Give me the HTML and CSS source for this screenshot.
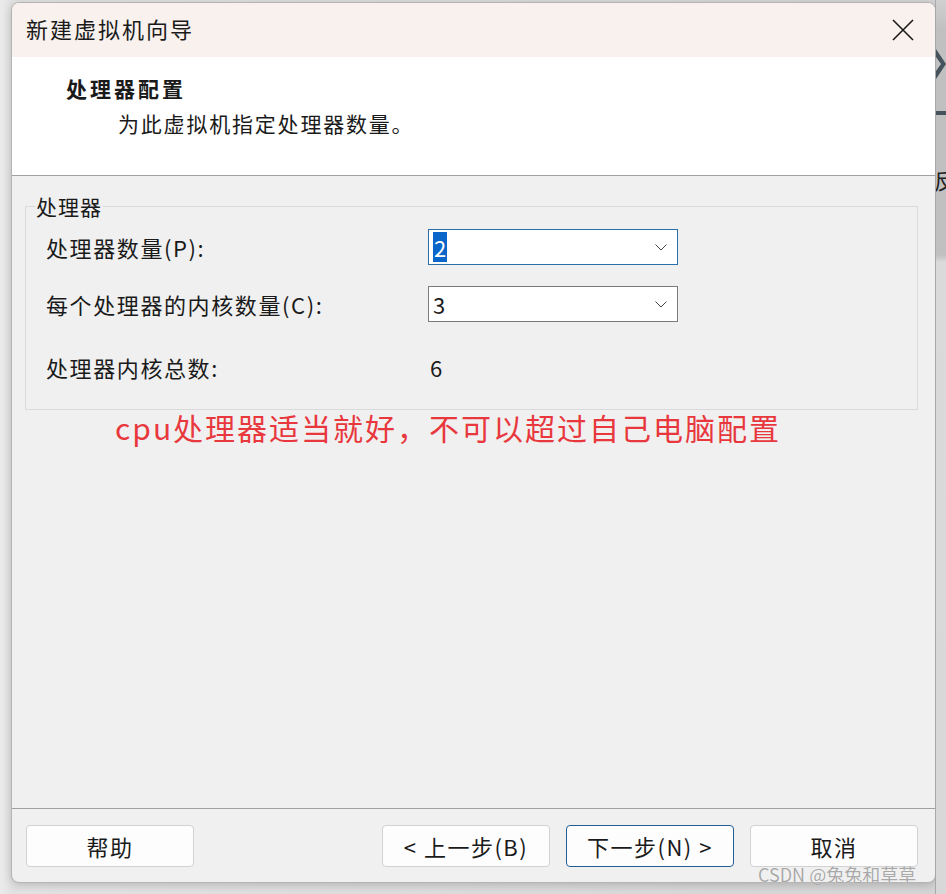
FILE: index.html
```html
<!DOCTYPE html>
<html lang="zh-CN">
<head>
    <meta charset="UTF-8">
    <title>新建虚拟机向导</title>
    <link rel="stylesheet" href="styles.css">
</head>
<body>
    <div class="desktop">
        <!-- bits of the window behind, peeking out on the right -->
        <div class="behind">
            <svg class="behind-arrow" width="10" height="30" viewBox="0 0 10 30">
                <path d="M0 0 L10 15 L0 30 L0 22 L5 15 L0 8 Z" fill="#46525c"/>
            </svg>
            <div class="behind-bar"></div>
            <span class="behind-char">反</span>
        </div>

        <div class="window">
            <div class="titlebar">
                <span class="title">新建虚拟机向导</span>
                <svg class="close" width="22" height="22" viewBox="0 0 22 22">
                    <path d="M1 1 L21 21 M21 1 L1 21" stroke="#1a1a1a" stroke-width="1.6"/>
                </svg>
            </div>

            <div class="header">
                <h1>处理器配置</h1>
                <p>为此虚拟机指定处理器数量。</p>
            </div>

            <div class="content">
                <fieldset class="group">
                    <legend>处理器</legend>
                    <div class="row">
                        <label>处理器数量(P):</label>
                        <div class="select is-focused">
                            <span class="value"><span class="selected">2</span></span>
                            <svg class="chevron" width="12" height="7" viewBox="0 0 12 7">
                                <path d="M0.5 0.5 L6 6 L11.5 0.5" fill="none" stroke="#444" stroke-width="1"/>
                            </svg>
                        </div>
                    </div>
                    <div class="row">
                        <label>每个处理器的内核数量(C):</label>
                        <div class="select">
                            <span class="value">3</span>
                            <svg class="chevron" width="12" height="7" viewBox="0 0 12 7">
                                <path d="M0.5 0.5 L6 6 L11.5 0.5" fill="none" stroke="#444" stroke-width="1"/>
                            </svg>
                        </div>
                    </div>
                    <div class="row row-total">
                        <label>处理器内核总数:</label>
                        <span class="total">6</span>
                    </div>
                </fieldset>

                <p class="note">cpu处理器适当就好，不可以超过自己电脑配置</p>
            </div>

            <div class="footer">
                <button class="btn">帮助</button>
                <div class="spacer"></div>
                <button class="btn">&lt; 上一步(B)</button>
                <button class="btn btn-default">下一步(N) &gt;</button>
                <button class="btn">取消</button>
            </div>
        </div>

        <span class="watermark">CSDN @兔兔和草草</span>
    </div>
</body>
</html>
```

FILE: styles.css
```css
body {
    margin: 0;
    font-family: "Noto Sans CJK SC", "Noto Sans", sans-serif;
    color: #1a1a1a;
}
.desktop {
    position: relative;
    width: 946px;
    height: 894px;
    overflow: hidden;
    background: linear-gradient(to right, #ebebeb 0, #e2e2e2 11px, #d4d4d4 100%);
    padding-top: 2px;
    box-sizing: border-box;
}
.behind {
    position: absolute;
    right: 0;
    top: 0;
    width: 10px;
    height: 894px;
    background: linear-gradient(to bottom, #d0d0d0 0, #c0c0c0 30px, #c0c0c0 255px, #dadada 262px, #d8d8d8 100%);
    border-left: 1px solid #a8a8a8;
    overflow: hidden;
}
.behind-arrow {
    position: absolute;
    left: 0;
    top: 49px;
}
.behind-bar {
    position: absolute;
    left: 0;
    top: 111px;
    width: 10px;
    height: 4px;
    background: #46525c;
}
.behind-char {
    position: absolute;
    left: -2px;
    top: 166px;
    font-size: 22px;
    line-height: 26px;
    color: #222;
}
.window {
    margin-left: 11px;
    width: 925px;
    height: 881px;
    box-sizing: border-box;
    border: 1px solid #b4b4b4;
    border-radius: 8px;
    background: #f0f0f0;
    box-shadow: 0 2px 8px rgba(0, 0, 0, 0.18);
    display: flex;
    flex-direction: column;
    overflow: hidden;
}
.titlebar {
    height: 54px;
    flex: none;
    box-sizing: border-box;
    background: #f8f1ed;
    display: flex;
    align-items: center;
    justify-content: space-between;
    padding: 0 21px 4px 14px;
}
.close {
    margin-top: 3px;
}
.title {
    font-size: 22px;
    letter-spacing: 2px;
    line-height: 30px;
}
.header {
    height: 119px;
    flex: none;
    box-sizing: border-box;
    background: #fff;
    border-bottom: 1px solid #a0a0a0;
    padding: 16px 0 0 54px;
}
.header h1 {
    margin: 0;
    font-size: 21px;
    font-weight: bold;
    letter-spacing: 3px;
    line-height: 30px;
}
.header p {
    margin: 5px 0 0 52px;
    font-size: 21px;
    letter-spacing: 1.8px;
    line-height: 30px;
}
.content {
    flex: 1;
    padding: 20px 17px 0 13px;
}
.group {
    margin: 0;
    padding: 13px 0 22px 20px;
    border: 1px solid #dadada;
    height: 214px;
    box-sizing: border-box;
}
.group legend {
    font-size: 21px;
    line-height: 20px;
    letter-spacing: 1px;
    padding: 0 1px;
    margin-left: -11px;
}
.row {
    display: flex;
    align-items: center;
    height: 36px;
    margin-bottom: 21px;
}
.row label {
    width: 382px;
    flex: none;
    font-size: 22px;
    letter-spacing: 1.6px;
}
.row-total {
    margin-top: 27px;
}
.select {
    width: 250px;
    height: 36px;
    box-sizing: border-box;
    border: 1px solid #7a7a7a;
    background: #fff;
    display: flex;
    align-items: center;
    justify-content: space-between;
    padding: 0 10px 0 2px;
}
.select.is-focused {
    border-color: #2a6fa8;
}
.value {
    font-size: 22px;
    line-height: 30px;
    padding-left: 2px;
}
.selected {
    display: inline-block;
    background: #0a66c8;
    color: #fff;
    padding: 0 1px;
}
.chevron {
    margin-top: 1px;
}
.total {
    font-size: 22px;
    padding-left: 2px;
}
.note {
    margin: -3px 0 0 90px;
    font-size: 30px;
    line-height: 40px;
    letter-spacing: 2px;
    color: #e8383d;
}
.footer {
    height: 74px;
    flex: none;
    box-sizing: border-box;
    border-top: 1px solid #a0a0a0;
    display: flex;
    gap: 16px;
    padding: 16px 17px 0 14px;
}
.spacer {
    flex: 1;
}
.btn {
    width: 168px;
    height: 42px;
    background: #fdfdfd;
    border: 1px solid #d2d2d2;
    border-radius: 4px;
    font-family: inherit;
    font-size: 22px;
    letter-spacing: 1.5px;
    color: #1a1a1a;
    padding: 0;
}
.btn-default {
    border-color: #1f5f96;
}
.watermark {
    position: absolute;
    left: 758px;
    top: 862px;
    font-size: 18px;
    line-height: 24px;
    color: rgba(140, 140, 140, 0.75);
    text-shadow: 0 0 1px #fff;
}
```
